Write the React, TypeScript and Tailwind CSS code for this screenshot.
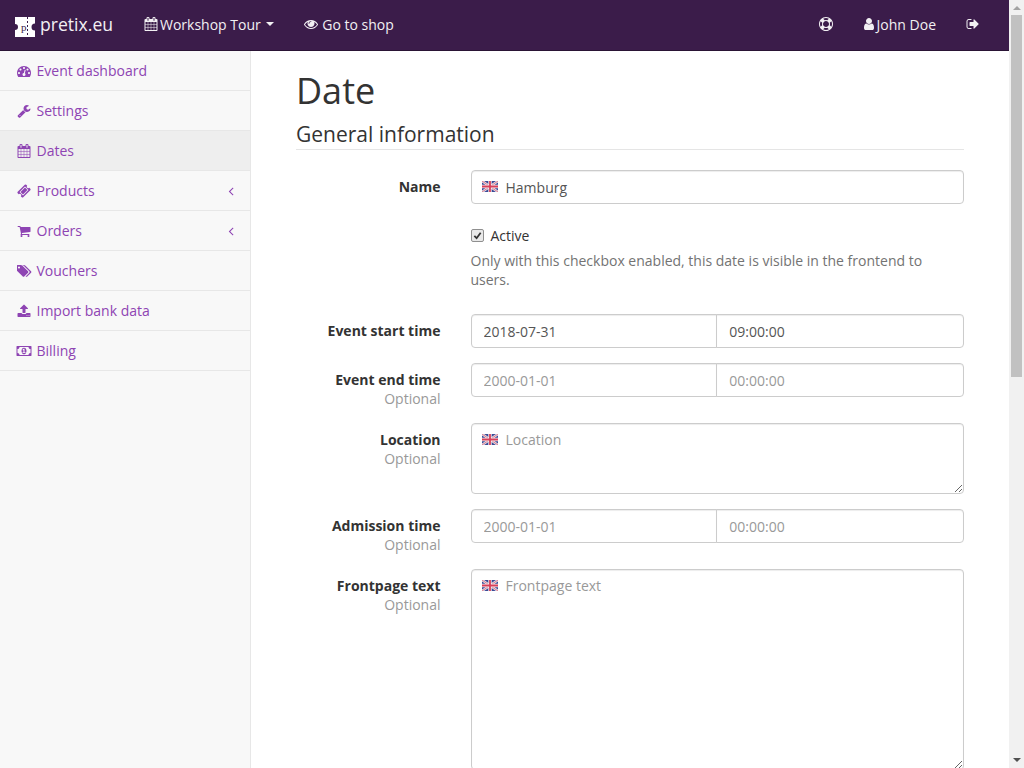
import type { ReactNode } from 'react';

// Font Awesome 4 glyphs, the icon packages only ship the newer shapes
const P = {
    dashboard: 'M384 1152q0-53-37.5-90.5t-90.5-37.5-90.5 37.5-37.5 90.5 37.5 90.5 90.5 37.5 90.5-37.5 37.5-90.5zm192-448q0-53-37.5-90.5t-90.5-37.5-90.5 37.5-37.5 90.5 37.5 90.5 90.5 37.5 90.5-37.5 37.5-90.5zm428 481l101-382q6-26-7.5-48.5t-38.5-29.5-48 6.5-30 39.5l-101 382q-60 5-107 43.5t-63 98.5q-20 77 20 146t117 89 146-20 89-117q16-60-6-117t-72-91zm660-33q0-53-37.5-90.5t-90.5-37.5-90.5 37.5-37.5 90.5 37.5 90.5 90.5 37.5 90.5-37.5 37.5-90.5zm-640-640q0-53-37.5-90.5t-90.5-37.5-90.5 37.5-37.5 90.5 37.5 90.5 90.5 37.5 90.5-37.5 37.5-90.5zm448 192q0-53-37.5-90.5t-90.5-37.5-90.5 37.5-37.5 90.5 37.5 90.5 90.5 37.5 90.5-37.5 37.5-90.5zm320 448q0 261-141 483-19 29-54 29h-1402q-35 0-54-29-141-221-141-483 0-182 71-348t191-286 286-191 348-71 348 71 286 191 191 286 71 348z',
    wrench: 'M448 1472q0-26-19-45t-45-19-45 19-19 45 19 45 45 19 45-19 19-45zm644-420l-682 682q-37 37-90 37-52 0-91-37l-106-108q-38-36-38-90 0-53 38-91l681-681q39 98 114.5 173.5t173.5 114.5zm634-435q0 39-23 106-47 134-164.5 217.5t-258.5 83.5q-185 0-316.5-131.5t-131.5-316.5 131.5-316.5 316.5-131.5q58 0 121.5 16.5t107.5 46.5q16 11 16 28t-16 28l-293 169v224l193 107q5-3 79-48.5t135.5-81 70.5-35.5q15 0 23.5 10t8.5 25z',
    calendar: 'M192 1664h288v-288h-288v288zm352 0h320v-288h-320v288zm-352-352h288v-320h-288v320zm352 0h320v-320h-320v320zm-352-384h288v-288h-288v288zm736 736h320v-288h-320v288zm-384-736h320v-288h-320v288zm768 736h288v-288h-288v288zm-384-352h320v-320h-320v320zm-352-864v-288q0-13-9.5-22.5t-22.5-9.5h-64q-13 0-22.5 9.5t-9.5 22.5v288q0 13 9.5 22.5t22.5 9.5h64q13 0 22.5-9.5t9.5-22.5zm736 864h288v-320h-288v320zm-384-384h320v-288h-320v288zm384 0h288v-288h-288v288zm32-480v-288q0-13-9.5-22.5t-22.5-9.5h-64q-13 0-22.5 9.5t-9.5 22.5v288q0 13 9.5 22.5t22.5 9.5h64q13 0 22.5-9.5t9.5-22.5zm384-64v1280q0 52-38 90t-90 38h-1408q-52 0-90-38t-38-90v-1280q0-52 38-90t90-38h128v-96q0-66 47-113t113-47h64q66 0 113 47t47 113v96h384v-96q0-66 47-113t113-47h64q66 0 113 47t47 113v96h128q52 0 90 38t38 90z',
    ticket: 'M1024 452l316 316-572 572-316-316zm-211 979l618-618q19-19 19-45t-19-45l-362-362q-18-18-45-18t-45 18l-618 618q-19 19-19 45t19 45l362 362q18 18 45 18t45-18zm889-637l-907 908q-37 37-90.5 37t-90.5-37l-126-126q56-56 56-136t-56-136-136-56-136 56l-125-126q-37-37-37-90.5t37-90.5l907-906q37-37 90.5-37t90.5 37l125 125q-56 56-56 136t56 136 136 56 136-56l126 125q37 37 37 90.5t-37 90.5z',
    cart: 'M704 1536q0 52-38 90t-90 38-90-38-38-90 38-90 90-38 90 38 38 90zm896 0q0 52-38 90t-90 38-90-38-38-90 38-90 90-38 90 38 38 90zm128-1088v512q0 24-16.5 42.5t-40.5 21.5l-1044 122q13 60 13 70 0 16-24 64h920q26 0 45 19t19 45-19 45-45 19h-1024q-26 0-45-19t-19-45q0-11 8-31.5t16-36 21.5-40 15.5-29.5l-177-823h-204q-26 0-45-19t-19-45 19-45 45-19h256q16 0 28.5 6.5t19.5 15.5 13 24.5 8 26 5.5 29.5 4.5 26h1201q26 0 45 19t19 45z',
    tags: 'M384 448q0-53-37.5-90.5t-90.5-37.5-90.5 37.5-37.5 90.5 37.5 90.5 90.5 37.5 90.5-37.5 37.5-90.5zm1067 576q0 53-37 90l-491 492q-39 37-91 37-53 0-90-37l-715-716q-38-37-64.5-101t-26.5-117v-416q0-52 38-90t90-38h416q53 0 117 26.5t102 64.5l715 714q37 39 37 91zm384 0q0 53-37 90l-491 492q-39 37-91 37-36 0-59-14t-53-45l470-470q37-37 37-90 0-52-37-91l-715-714q-38-38-102-64.5t-117-26.5h224q53 0 117 26.5t102 64.5l715 714q37 39 37 91z',
    upload: 'M1344 1472q0-26-19-45t-45-19-45 19-19 45 19 45 45 19 45-19 19-45zm256 0q0-26-19-45t-45-19-45 19-19 45 19 45 45 19 45-19 19-45zm128-224v320q0 40-28 68t-68 28h-1472q-40 0-68-28t-28-68v-320q0-40 28-68t68-28h427q21 56 70.5 92t110.5 36h256q61 0 110.5-36t70.5-92h427q40 0 68 28t28 68zm-325-648q-17 40-59 40h-256v448q0 26-19 45t-45 19h-256q-26 0-45-19t-19-45v-448h-256q-42 0-59-40-17-39 14-69l448-448q18-19 45-19t45 19l448 448q31 30 14 69z',
    money: 'M832 1152h384v-96h-128v-448h-114l-148 137 77 80q42-37 55-57h2v288h-128v96zm512-256q0 70-21 142t-59.5 134-101.5 101-138 39-138-39-101.5-101-59.5-134-21-142 21-142 59.5-134 101.5-101 138-39 138 39 101.5 101 59.5 134 21 142zm512 256v-512q-106 0-181-75t-75-181h-1152q0 106-75 181t-181 75v512q106 0 181 75t75 181h1152q0-106 75-181t181-75zm128-832v1152q0 26-19 45t-45 19h-1792q-26 0-45-19t-19-45v-1152q0-26 19-45t45-19h1792q26 0 45 19t19 45z',
    eye: 'M1664 960q-152-236-381-353 61 104 61 225 0 185-131.5 316.5t-316.5 131.5-316.5-131.5-131.5-316.5q0-121 61-225-229 117-381 353 133 205 333.5 326.5t434.5 121.5 434.5-121.5 333.5-326.5zm-720-384q0-20-14-34t-34-14q-125 0-214.5 89.5t-89.5 214.5q0 20 14 34t34 14 34-14 14-34q0-86 61-147t147-61q20 0 34-14t14-34zm848 384q0 34-20 69-140 230-376.5 368.5t-499.5 138.5-499.5-139-376.5-368q-20-35-20-69t20-69q140-229 376.5-368t499.5-139 499.5 139 376.5 368q20 35 20 69z',
    lifeRing: 'M896 0q182 0 348 71t286 191 191 286 71 348-71 348-191 286-286 191-348 71-348-71-286-191-191-286-71-348 71-348 191-286 286-191 348-71zm0 128q-190 0-361 90l194 194q82-28 167-28t167 28l194-194q-171-90-361-90zm-678 1129l194-194q-28-82-28-167t28-167l-194-194q-90 171-90 361t90 361zm678 407q190 0 361-90l-194-194q-82 28-167 28t-167-28l-194 194q171 90 361 90zm0-384q159 0 271.5-112.5t112.5-271.5-112.5-271.5-271.5-112.5-271.5 112.5-112.5 271.5 112.5 271.5 271.5 112.5zm484-217l194 194q90-171 90-361t-90-361l-194 194q28 82 28 167t-28 167z',
    user: 'M1536 1399q0 109-62.5 187t-150.5 78h-854q-88 0-150.5-78t-62.5-187q0-85 8.5-160.5t31.5-152 58.5-131 94-89 134.5-34.5q131 128 313 128t313-128q76 0 134.5 34.5t94 89 58.5 131 31.5 152 8.5 160.5zm-256-887q0 159-112.5 271.5t-271.5 112.5-271.5-112.5-112.5-271.5 112.5-271.5 271.5-112.5 271.5 112.5 112.5 271.5z',
    signOut: 'M704 1440q0 4 1 20t.5 26.5-3 23.5-10 19.5-20.5 6.5h-320q-119 0-203.5-84.5t-84.5-203.5v-704q0-119 84.5-203.5t203.5-84.5h320q13 0 22.5 9.5t9.5 22.5q0 4 1 20t.5 26.5-3 23.5-10 19.5-20.5 6.5h-320q-66 0-113 47t-47 113v704q0 66 47 113t113 47h312l11.5 1 11.5 3 8 5.5 7 9 2 13.5zm928-544q0 26-19 45l-544 544q-19 19-45 19t-45-19-19-45v-288h-448q-26 0-45-19t-19-45v-384q0-26 19-45t45-19h448v-288q0-26 19-45t45-19 45 19l544 544q19 19 19 45z',
    angleLeft: 'M1203 544q0 13-10 23l-393 393 393 393q10 10 10 23t-10 23l-50 50q-10 10-23 10t-23-10l-466-466q-10-10-10-23t10-23l466-466q10-10 23-10t23 10l50 50q10 10 10 23z',
};

function Fa({ d, vb = 1792 }: { d: string; vb?: number }) {
    return (
        <svg width={(14 * vb) / 1792} height="14" viewBox={`0 0 ${vb} 1792`} fill="currentColor" className="shrink-0">
            <path d={d} />
        </svg>
    );
}

const navItems = [
    { label: 'Event dashboard', d: P.dashboard },
    { label: 'Settings', d: P.wrench },
    { label: 'Dates', d: P.calendar, active: true },
    { label: 'Products', d: P.ticket, arrow: true },
    { label: 'Orders', d: P.cart, arrow: true },
    { label: 'Vouchers', d: P.tags, vb: 1920 },
    { label: 'Import bank data', d: P.upload },
    { label: 'Billing', d: P.money, vb: 2048 },
];

function Flag() {
    return (
        <svg width="16" height="11" viewBox="0 0 16 11" className="absolute left-[11px] top-[11px]">
            <rect width="16" height="11" fill="#3a4a96" />
            <path d="M0 0L16 11M16 0L0 11" stroke="#e6e0e6" strokeWidth="2.4" />
            <path d="M0 0L16 11M16 0L0 11" stroke="#d8607a" strokeWidth="0.8" />
            <path d="M8 0V11M0 5.5H16" stroke="#f4eef0" strokeWidth="3.4" />
            <path d="M8 0V11M0 5.5H16" stroke="#d8405a" strokeWidth="1.8" />
        </svg>
    );
}

function Row({ label, optional, className = 'mt-[15px]', children }: { label: string; optional?: boolean; className?: string; children: ReactNode }) {
    return (
        <div className={`flex gap-[30px] ${className}`}>
            <div className="w-[144.5px] shrink-0 text-right pt-[7px] leading-[19px]">
                <div className="font-bold">{label}</div>
                {optional && <div className="text-[#999]">Optional</div>}
            </div>
            {children}
        </div>
    );
}

function DateTime({ date, time, filled }: { date: string; time: string; filled?: boolean }) {
    const cls = `h-[34px] border border-[#ccc] px-3 outline-none ${filled ? 'placeholder:text-[#555]' : 'placeholder:text-[#999]'} shadow-[inset_0_1px_1px_rgba(0,0,0,0.075)]`;
    return (
        <div className="flex w-[493.5px]">
            <input className={`${cls} w-1/2 rounded-l-[4px]`} placeholder={date} />
            <input className={`${cls} w-[calc(50%+1px)] -ml-px rounded-r-[4px]`} placeholder={time} />
        </div>
    );
}

function I18nArea({ placeholder, height }: { placeholder: string; height: string }) {
    return (
        <div className="relative w-[493.5px]">
            <Flag />
            <textarea
                placeholder={placeholder}
                className={`block w-full ${height} border border-[#ccc] rounded-[4px] pl-[34px] pr-3 py-[6px] leading-[20px] outline-none placeholder:text-[#999] shadow-[inset_0_1px_1px_rgba(0,0,0,0.075)]`}
            />
        </div>
    );
}

export default function App() {
    return (
        <div className="h-screen overflow-hidden flex bg-white text-[14px] text-[#333] font-['Open_Sans',sans-serif]">
            <div className="flex-1 min-w-0 flex flex-col">
                {/* Top bar */}
                <div className="h-[51px] shrink-0 bg-[#3b1c4a] border-b border-[#2a1435] flex items-center pb-[2px] text-[#f2f0f3]">
                    <div className="flex items-center pl-[15px] w-[144px]">
                        <svg width="20" height="20" viewBox="0 0 20 20" className="mr-[5px] translate-y-[3px]">
                            <path d="M0 0H20V6.5A3.5 3.5 0 0 0 20 13.5V20H0V13A3 3 0 0 0 0 7Z" fill="#fff" />
                            <path d="M12.5 0V20" stroke="#3b1c4a" strokeWidth="1" strokeDasharray="2 2" />
                            <text x="6" y="14" fontSize="11" fill="#3b1c4a" fontFamily="'Liberation Serif', serif">p</text>
                        </svg>
                        <span className="text-[17.6px]">pretix.eu</span>
                    </div>
                    <div className="flex items-center">
                        <Fa d={P.calendar} />
                        <span className="ml-[2px]">Workshop Tour</span>
                        <span className="ml-[5.5px] border-x-[4px] border-x-transparent border-t-[4px] border-t-[#f2f0f3]" />
                    </div>
                    <div className="flex items-center ml-[30px]">
                        <Fa d={P.eye} />
                        <span className="ml-[4px]">Go to shop</span>
                    </div>
                    <div className="ml-auto flex items-center">
                        <Fa d={P.lifeRing} />
                        <span className="ml-[28.5px]"><Fa d={P.user} /></span>
                        <span className="ml-px">John Doe</span>
                        <span className="ml-[29.5px] mr-[29.5px]"><Fa d={P.signOut} /></span>
                    </div>
                </div>

                <div className="flex-1 flex min-h-0">
                    {/* Sidebar */}
                    <div className="w-[251px] shrink-0 bg-[#f8f8f8] border-r border-[#e7e7e7]">
                        {navItems.map((item) => (
                            <div
                                key={item.label}
                                className={`h-[40px] flex items-center pl-[17px] pr-[12px] border-b border-[#e7e7e7] text-[#8e44b3] ${item.active ? 'bg-[#eee]' : ''}`}
                            >
                                <span className="w-[14px] flex justify-center">
                                    <Fa d={item.d} vb={item.vb} />
                                </span>
                                <span className="ml-[5.5px]">{item.label}</span>
                                {item.arrow && <span className="ml-auto"><Fa d={P.angleLeft} /></span>}
                            </div>
                        ))}
                    </div>

                    {/* Content */}
                    <div className="flex-1 min-w-0 overflow-hidden pl-[45px] pr-[45px]">
                        <h1 className="text-[36px] leading-[40px] mt-[20px] font-normal">Date</h1>
                        <div className="mt-[8px] text-[21px] leading-[30px] border-b border-[#e5e5e5]">General information</div>

                        <Row label="Name" className="mt-[20px]">
                            <div className="relative w-[493.5px]">
                                <Flag />
                                <input
                                    placeholder="Hamburg"
                                    className="block w-full h-[34px] border border-[#ccc] rounded-[4px] pl-[34px] pr-3 outline-none placeholder:text-[#555] shadow-[inset_0_1px_1px_rgba(0,0,0,0.075)]"
                                />
                            </div>
                        </Row>

                        <div className="ml-[174.5px] mt-[21px]">
                            <label className="flex items-center h-[20px]">
                                <span className="relative w-[13px] h-[13px] mr-[7px] shrink-0">
                                    <input
                                        type="checkbox"
                                        defaultChecked
                                        className="block appearance-none w-[13px] h-[13px] rounded-[2px] border border-[#8f8f8f] bg-[#e9e9e9]"
                                    />
                                    <svg width="9" height="9" viewBox="0 0 10 10" className="absolute left-[2px] top-[2px]">
                                        <path d="M1.5 5.5L4 8L8.5 2" fill="none" stroke="#333" strokeWidth="2" />
                                    </svg>
                                </span>
                                <span>Active</span>
                            </label>
                            <p className="mt-[6px] text-[#737373] leading-[19px] w-[493.5px]">
                                Only with this checkbox enabled, this date is visible in the frontend to users.
                            </p>
                        </div>

                        <Row label="Event start time" className="mt-[25px]">
                            <DateTime date="2018-07-31" time="09:00:00" filled />
                        </Row>
                        <Row label="Event end time" optional>
                            <DateTime date="2000-01-01" time="00:00:00" />
                        </Row>
                        <Row label="Location" optional>
                            <I18nArea placeholder="Location" height="h-[71px]" />
                        </Row>
                        <Row label="Admission time" optional>
                            <DateTime date="2000-01-01" time="00:00:00" />
                        </Row>
                        <Row label="Frontpage text" optional>
                            <I18nArea placeholder="Frontpage text" height="h-[201px]" />
                        </Row>
                    </div>
                </div>
            </div>

            {/* Window scrollbar */}
            <div className="w-[15px] shrink-0 bg-[#f1f1f1] flex flex-col items-center">
                <span className="mt-[6px] border-x-[4px] border-x-transparent border-b-[4px] border-b-[#a3a3a3]" />
                <div className="mt-[5px] w-[11px] h-[362px] bg-[#c1c1c1]" />
                <span className="mt-auto mb-[6px] border-x-[4px] border-x-transparent border-t-[4px] border-t-[#505050]" />
            </div>
        </div>
    );
}
